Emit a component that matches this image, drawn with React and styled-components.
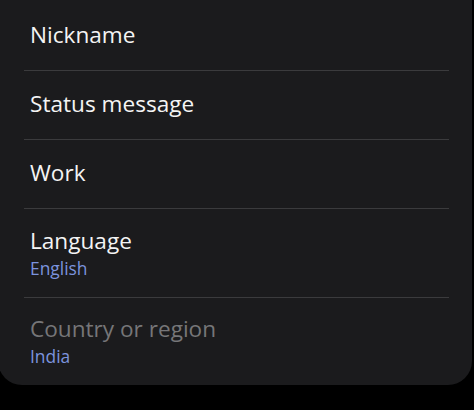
import styled, { createGlobalStyle } from "styled-components";

const GlobalStyle = createGlobalStyle`
  html, body {
    margin: 0;
    padding: 0;
    background: #000;
  }
  body {
    font-family: "Open Sans", "Noto Sans", sans-serif;
    -webkit-font-smoothing: antialiased;
  }
`;

const items = [
  { title: "Nickname" },
  { title: "Status message" },
  { title: "Work" },
  { title: "Language", value: "English" },
  { title: "Country or region", value: "India", disabled: true },
];

const App = () => {
  return (
    <>
      <GlobalStyle />
      <Card>
        {items.map((item, i) => (
          <div key={item.title}>
            {i > 0 && <Divider />}
            <Row $tall={!!item.value} $last={i === items.length - 1}>
              <Title $disabled={item.disabled}>{item.title}</Title>
              {item.value && <Value>{item.value}</Value>}
            </Row>
          </div>
        ))}
      </Card>
    </>
  );
};

const Card = styled.div`
  width: 474px;
  margin-left: -2px;
  padding-top: 2px;
  background: #1b1b1d;
  border-radius: 0 0 24px 24px;
  overflow: hidden;
`;

const Row = styled.div`
  height: ${(p) => (p.$tall ? (p.$last ? 87 : 88) : 68)}px;
  padding: ${(p) => (p.$tall ? "1px 32px 0" : "0 32px 3px")};
  display: flex;
  flex-direction: column;
  justify-content: center;
  box-sizing: border-box;
`;

const Title = styled.div`
  font-size: 22.6px;
  line-height: 28px;
  color: ${(p) => (p.$disabled ? "#767678" : "#f4f4f4")};
`;

const Value = styled.div`
  font-size: 17.4px;
  line-height: 26px;
  color: #7b93de;
`;

const Divider = styled.div`
  height: 1px;
  margin: 0 23px 0 26px;
  background: #3b3b3d;
`;

export default App;
